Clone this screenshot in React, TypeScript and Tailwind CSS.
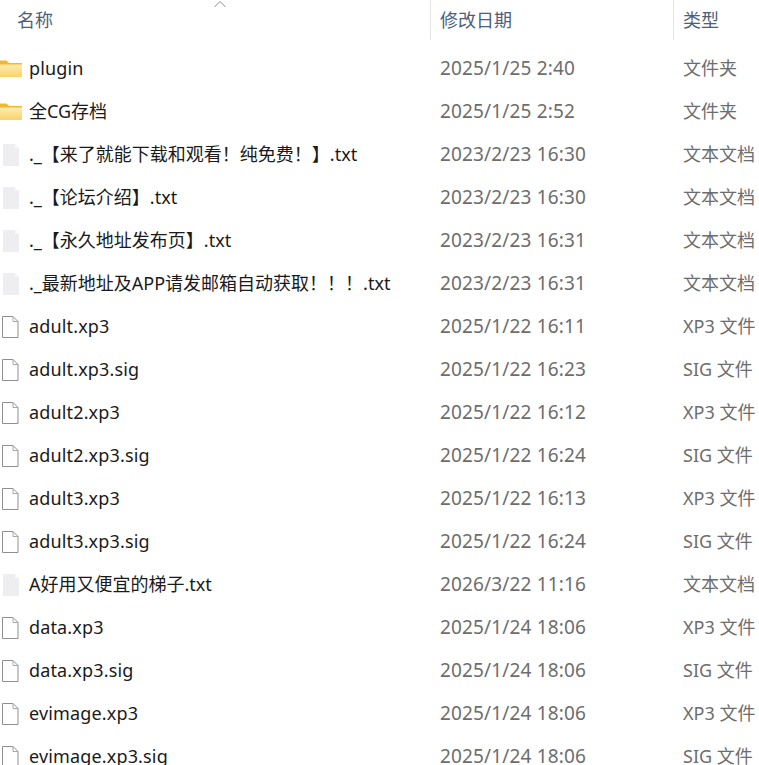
const files = [
  { name: "plugin", date: "2025/1/25 2:40", type: "文件夹", icon: "folder" },
  { name: "全CG存档", date: "2025/1/25 2:52", type: "文件夹", icon: "folder" },
  { name: "._【来了就能下载和观看！纯免费！】.txt", date: "2023/2/23 16:30", type: "文本文档", icon: "txt" },
  { name: "._【论坛介绍】.txt", date: "2023/2/23 16:30", type: "文本文档", icon: "txt" },
  { name: "._【永久地址发布页】.txt", date: "2023/2/23 16:31", type: "文本文档", icon: "txt" },
  { name: "._最新地址及APP请发邮箱自动获取！！！.txt", date: "2023/2/23 16:31", type: "文本文档", icon: "txt" },
  { name: "adult.xp3", date: "2025/1/22 16:11", type: "XP3 文件", icon: "file" },
  { name: "adult.xp3.sig", date: "2025/1/22 16:23", type: "SIG 文件", icon: "file" },
  { name: "adult2.xp3", date: "2025/1/22 16:12", type: "XP3 文件", icon: "file" },
  { name: "adult2.xp3.sig", date: "2025/1/22 16:24", type: "SIG 文件", icon: "file" },
  { name: "adult3.xp3", date: "2025/1/22 16:13", type: "XP3 文件", icon: "file" },
  { name: "adult3.xp3.sig", date: "2025/1/22 16:24", type: "SIG 文件", icon: "file" },
  { name: "A好用又便宜的梯子.txt", date: "2026/3/22 11:16", type: "文本文档", icon: "txt" },
  { name: "data.xp3", date: "2025/1/24 18:06", type: "XP3 文件", icon: "file" },
  { name: "data.xp3.sig", date: "2025/1/24 18:06", type: "SIG 文件", icon: "file" },
  { name: "evimage.xp3", date: "2025/1/24 18:06", type: "XP3 文件", icon: "file" },
  { name: "evimage.xp3.sig", date: "2025/1/24 18:06", type: "SIG 文件", icon: "file" },
];

function FolderIcon() {
  return (
    <svg width="22" height="18" viewBox="0 0 22 18" className="shrink-0">
      <defs>
        <linearGradient id="folderFill" x1="0" y1="0" x2="0" y2="1">
          <stop offset="0" stopColor="#fdecb4" />
          <stop offset="1" stopColor="#fbd265" />
        </linearGradient>
      </defs>
      <path d="M0 0.5h6.5l2.5 2.5h13V6H0z" fill="#f3b62f" />
      <path d="M0 4.5h22V17H0z" fill="url(#folderFill)" />
    </svg>
  );
}

function TxtIcon() {
  return (
    <svg width="22" height="24" viewBox="0 0 22 24" className="shrink-0">
      <path d="M3 1h12l4 4v18H3z" fill="#eeeef0" />
      <path d="M15 1l4 4h-4z" fill="#f9f9fa" />
    </svg>
  );
}

function FileIcon() {
  return (
    <svg width="22" height="24" viewBox="0 0 22 24" className="shrink-0">
      <path d="M2.5 1.5h10.5l5 5v16h-15.500z" fill="#ffffff" stroke="#8f8f8f" strokeWidth="1" />
      <path d="M13 1.500v5h5" fill="none" stroke="#a8a8a8" strokeWidth="1" />
    </svg>
  );
}

export default function App() {
  return (
    <div className="h-[765px] w-[759px] overflow-hidden bg-white font-['Noto_Sans','Noto_Sans_CJK_SC',sans-serif] text-[18px]">
      {/* header */}
      <div className="relative flex h-[40px] text-[#4c607a]">
        <svg width="14" height="8" viewBox="0 0 14 8" className="absolute left-[213px] top-0">
          <path d="M1.500 7l5.500-5.500 5.500 5.500" fill="none" stroke="#8a8a8a" strokeWidth="1" />
        </svg>
        <div className="flex w-[430px] items-center pl-[17px]">名称</div>
        <div className="flex w-[243px] items-center border-l border-[#e6e6e6] pl-[9px]">修改日期</div>
        <div className="flex flex-1 items-center border-l border-[#e6e6e6] pl-[9px]">类型</div>
      </div>

      {/* rows */}
      <div className="pt-[7px]">
        {files.map((f) => (
          <div key={f.name} className="flex h-[43px] items-center">
            <div className="flex w-[440px] items-center gap-[7px] text-[#1a1a1a]">
              {f.icon === "folder" && <FolderIcon />}
              {f.icon === "txt" && <TxtIcon />}
              {f.icon === "file" && <FileIcon />}
              <span className={f.icon === "file" || f.name === "plugin" ? "whitespace-nowrap tracking-[0.15px]" : "whitespace-nowrap"}>
                {f.name}
              </span>
            </div>
            <div className="w-[243px] whitespace-nowrap text-[19px] tracking-[0.15px] text-[#6d6d6d]">{f.date}</div>
            <div className="whitespace-nowrap text-[#6d6d6d]">{f.type}</div>
          </div>
        ))}
      </div>
    </div>
  );
}
